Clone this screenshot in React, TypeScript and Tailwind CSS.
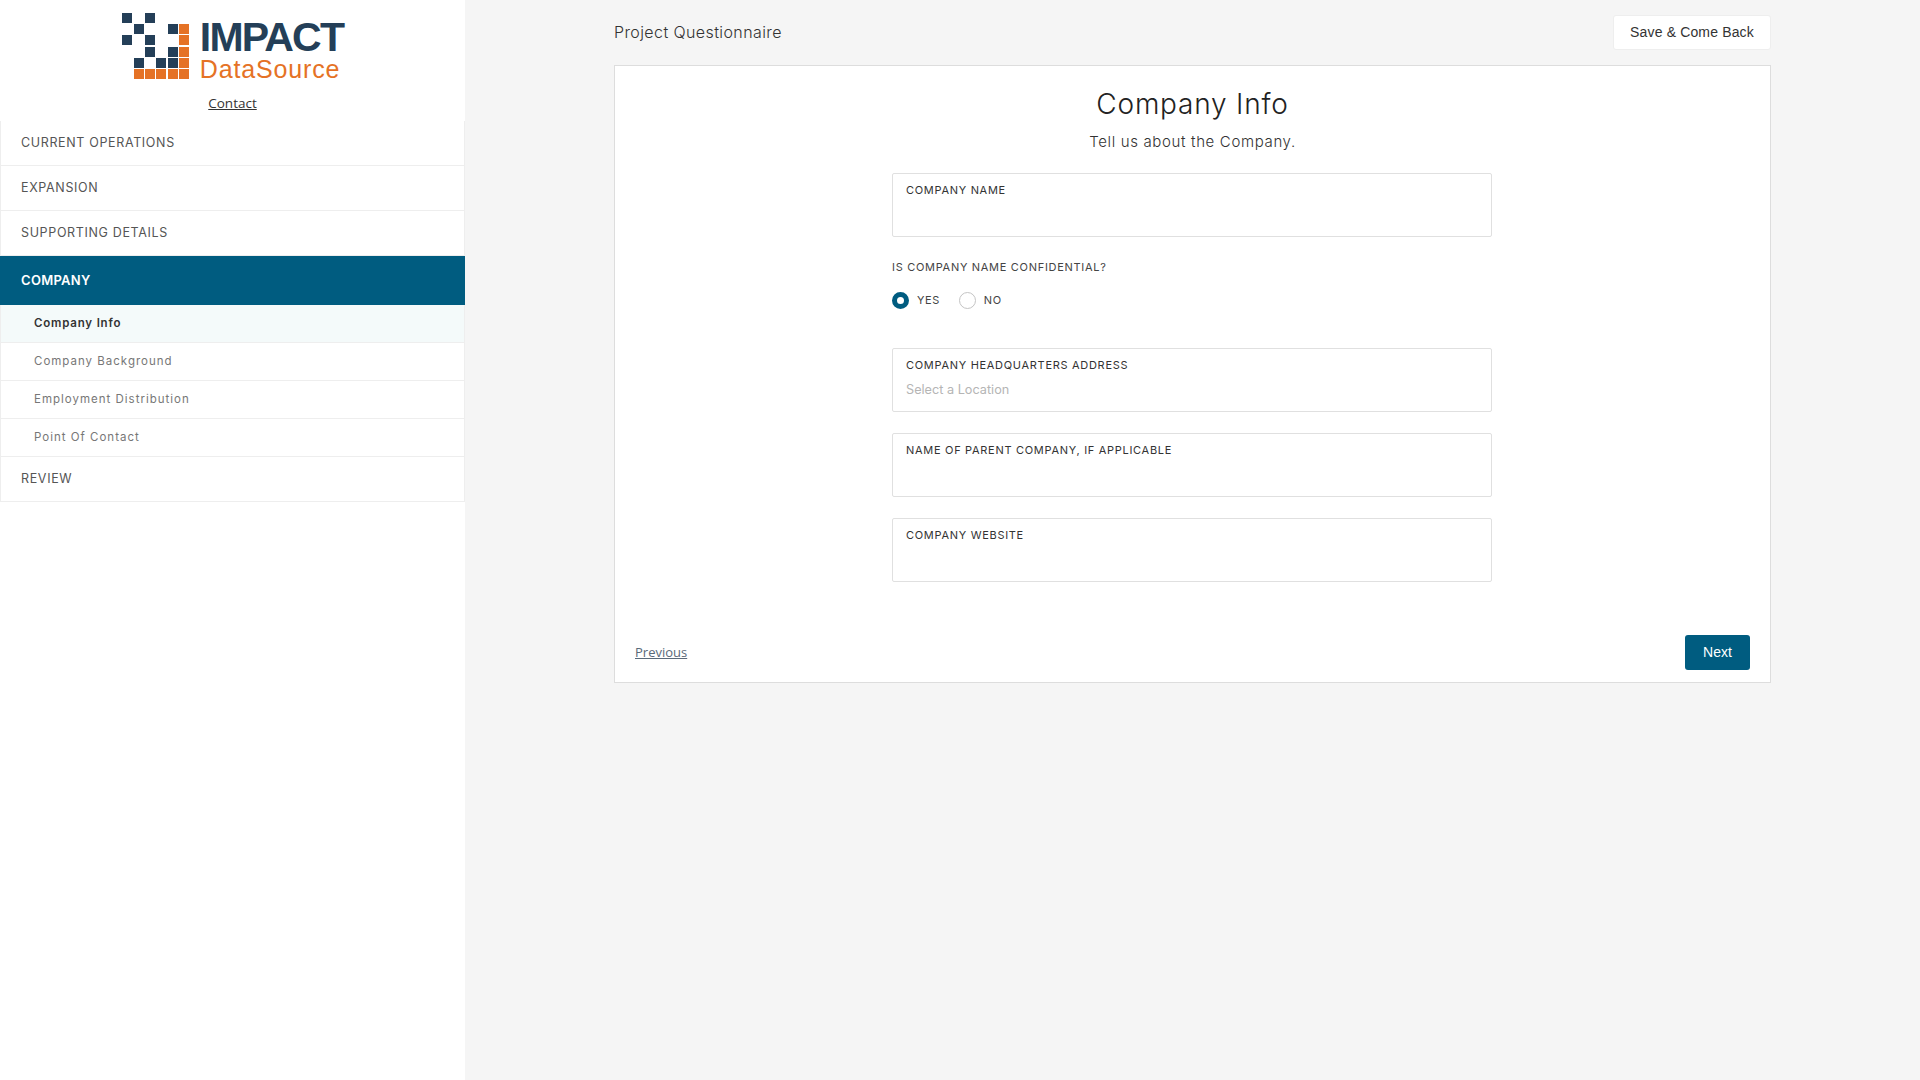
const navy = '#243f58';
const orange = '#e57225';

// logo squares: [x, y, colour]
const squares: [number, number, string][] = [
  [0, 0, navy], [23, 0, navy],
  [12, 11, navy], [46, 11, navy], [57, 11, orange],
  [0, 22, navy], [23, 22, navy], [57, 22, orange],
  [23, 34, navy], [46, 34, navy], [57, 34, orange],
  [12, 45, navy], [34, 45, navy], [46, 45, navy], [57, 45, orange],
  [12, 56, orange], [23, 56, orange], [34, 56, orange], [46, 56, orange], [57, 56, orange],
];

function Logo() {
  return (
    <div className="h-[79px] flex items-start justify-center gap-[11px] pt-[13px]">
      <svg width="67" height="66" viewBox="0 0 67 66" className="shrink-0">
        {squares.map(([x, y, c], i) => (
          <rect key={i} x={x} y={y} width="10" height="10" fill={c} />
        ))}
      </svg>
      <div className="flex flex-col font-['Liberation_Sans',sans-serif] mt-[5px]">
        <span className="text-[41px] leading-[38px] font-bold tracking-[-1.8px] text-[#243f58]">IMPACT</span>
        <span className="text-[25px] leading-[24px] tracking-[0.85px] text-[#e57225] mt-[1px]">DataSource</span>
      </div>
    </div>
  );
}

function NavItem({ label }: { label: string }) {
  return (
    <div className="h-[45px] flex items-center pl-[20px] border-x border-b border-[#eeeeee] text-[12.5px] tracking-[0.65px] text-[#555555]">
      {label}
    </div>
  );
}

function SubItem({ label, active }: { label: string; active?: boolean }) {
  return (
    <div
      className={
        active
          ? "h-[38px] flex items-center pl-[33px] border-x border-b border-[#eeeeee] bg-[#f4fafa] text-[11.5px] font-semibold tracking-[0.8px] text-[#333333]"
          : "h-[38px] flex items-center pl-[33px] border-x border-b border-[#eeeeee] text-[11.5px] tracking-[1px] text-[#777777]"
      }
    >
      {label}
    </div>
  );
}

function Field({ label, placeholder }: { label: string; placeholder?: string }) {
  return (
    <div className="w-[600px] h-[64px] mr-[1px] border border-[#e0e0e0] rounded-[2px] pl-[13px] pt-[8px] bg-white">
      <div className="text-[11px] leading-[16px] tracking-[0.7px] text-[#333333]">{label}</div>
      {placeholder && <div className="text-[12.7px] leading-[18px] mt-[8px] text-[#b5b5b5]">{placeholder}</div>}
    </div>
  );
}

function Radio({ label, checked }: { label: string; checked?: boolean }) {
  return (
    <div className="flex items-center gap-[8px]">
      {checked ? (
        <span className="w-[17px] h-[17px] rounded-full border-[5px] border-[#005c80] bg-white" />
      ) : (
        <span className="w-[17px] h-[17px] rounded-full border border-[#c4c4c4] bg-white" />
      )}
      <span className="text-[11px] tracking-[0.55px] text-[#444444]">{label}</span>
    </div>
  );
}

export default function App() {
  return (
    <div className="w-full h-[1080px] flex bg-[#f5f5f5] font-['Inter',sans-serif] overflow-hidden">
      {/* sidebar */}
      <aside className="w-[465px] shrink-0 bg-white">
        <div className="h-[121px]">
          <Logo />
          <div className="text-center font-['Open_Sans',sans-serif] text-[13.5px] leading-[18px] mt-[15px] underline text-[#333333]">
            Contact
          </div>
        </div>
        <NavItem label="CURRENT OPERATIONS" />
        <NavItem label="EXPANSION" />
        <NavItem label="SUPPORTING DETAILS" />
        <div className="h-[49px] flex items-center pl-[21px] bg-[#005c80] text-white text-[13px] font-semibold tracking-[0.3px]">
          COMPANY
        </div>
        <SubItem label="Company Info" active />
        <SubItem label="Company Background" />
        <SubItem label="Employment Distribution" />
        <SubItem label="Point Of Contact" />
        <NavItem label="REVIEW" />
      </aside>

      {/* main */}
      <main className="flex-1 pl-[149px]">
        <div className="w-[1157px]">
          <div className="h-[65px] flex items-start justify-between">
            <div className="mt-[22px] text-[16px] leading-[21px] font-light tracking-[0.4px] text-[#333333]">
              Project Questionnaire
            </div>
            <button className="mt-[15px] w-[158px] h-[35px] bg-white border border-[#eeeeee] rounded-[3px] font-['Liberation_Sans',sans-serif] text-[14px] tracking-[0.15px] text-[#333333]">
              Save &amp; Come Back
            </button>
          </div>
          <div className="h-[618px] flex flex-col items-center bg-white border border-[#dddddd]">
            <h2 className="mt-[20px] text-[28px] leading-[36px] font-light tracking-[0.8px] text-[#222222]">Company Info</h2>
            <p className="mt-[8px] text-[15px] leading-[24px] font-light tracking-[0.65px] text-[#333333]">Tell us about the Company.</p>
            <div className="mt-[19px]">
              <Field label="COMPANY NAME" />
            </div>
            <div className="w-[600px] mr-[1px] mt-[22px] text-[11px] leading-[16px] tracking-[0.7px] text-[#444444]">
              IS COMPANY NAME CONFIDENTIAL?
            </div>
            <div className="w-[600px] mr-[1px] mt-[17px] flex gap-[19px]">
              <Radio label="YES" checked />
              <Radio label="NO" />
            </div>
            <div className="mt-[39px]">
              <Field label="COMPANY HEADQUARTERS ADDRESS" placeholder="Select a Location" />
            </div>
            <div className="mt-[21px]">
              <Field label="NAME OF PARENT COMPANY, IF APPLICABLE" />
            </div>
            <div className="mt-[21px]">
              <Field label="COMPANY WEBSITE" />
            </div>
            <div className="mt-auto w-full flex items-center justify-between px-[20px] pb-[12px]">
              <a className="font-['Open_Sans',sans-serif] text-[13px] underline text-[#5a6a7a]">Previous</a>
              <button className="w-[65px] h-[35px] bg-[#005c80] rounded-[3px] font-['Liberation_Sans',sans-serif] text-[14px] text-white">
                Next
              </button>
            </div>
          </div>
        </div>
      </main>
    </div>
  );
}
